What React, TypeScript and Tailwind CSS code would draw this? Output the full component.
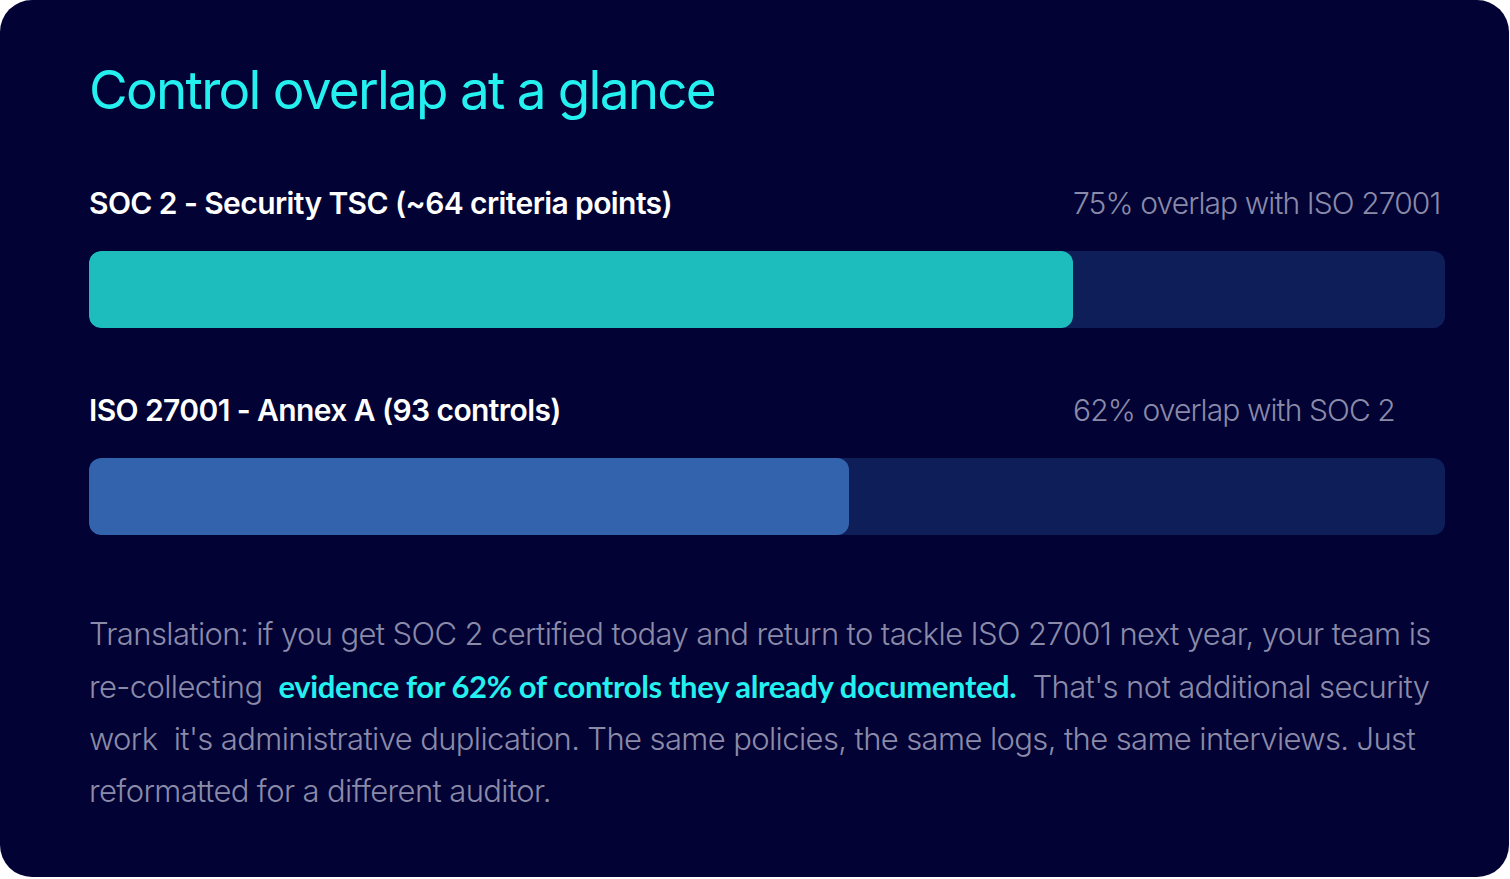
export default function App() {
  const bars = [
    {
      label: 'SOC 2 - Security TSC (~64 criteria points)',
      note: '75% overlap with ISO 27001',
      fill: 984,
      color: 'bg-[#1dbcbd]',
    },
    {
      label: 'ISO 27001 - Annex A (93 controls)',
      note: '62% overlap with SOC 2',
      fill: 760,
      color: 'bg-[#3463ad]',
    },
  ];

  return (
    <div className="min-h-screen bg-white">
      <div
        className="h-[877px] w-[1509px] rounded-[32px] bg-[#020234] pl-[89px] pr-[64px] pt-[56px]"
        style={{ fontFamily: 'Inter, "Noto Sans", sans-serif' }}
      >
        <h1 className="text-[53px] font-normal leading-[68px] tracking-[-0.033em] text-[#25f0f0]">
          Control overlap at a glance
        </h1>

        <div className="mt-[59px] flex flex-col gap-[62px]">
          {bars.map((bar) => (
            <div key={bar.label}>
              <div className="flex items-center justify-between">
                <span className="whitespace-nowrap text-[30px] font-semibold leading-[40px] tracking-[-0.02em] text-white">
                  {bar.label}
                </span>
                <span className="w-[372px] shrink-0 whitespace-nowrap text-[30px] font-light leading-[40px] tracking-[-0.03em] text-[#8a8aa9]">
                  {bar.note}
                </span>
              </div>
              <div className="mt-[28px] h-[77px] w-[1356px] overflow-hidden rounded-[12px] bg-[#0e1e58]">
                <div className={`h-full rounded-[12px] ${bar.color}`} style={{ width: bar.fill }} />
              </div>
            </div>
          ))}
        </div>

        <p className="mt-[73px] text-[31px] font-light leading-[52px] tracking-[-0.02em] text-[#8b8ba9]">
          Translation: if you get SOC 2 certified today and return to tackle ISO 27001 next year, your team is
          <br />
          re-collecting{' '}
          <span
            className="ml-[8px] mr-[8px] font-bold tracking-[-0.012em] text-[#25f0f0]"
            style={{ fontFamily: 'Lato, sans-serif' }}
          >
            evidence for 62% of controls they already documented.
          </span>{' '}
          That's not additional security
          <br />
          work&nbsp; it's administrative duplication. The same policies, the same logs, the same interviews. Just
          <br />
          reformatted for a different auditor.
        </p>
      </div>
    </div>
  );
}
